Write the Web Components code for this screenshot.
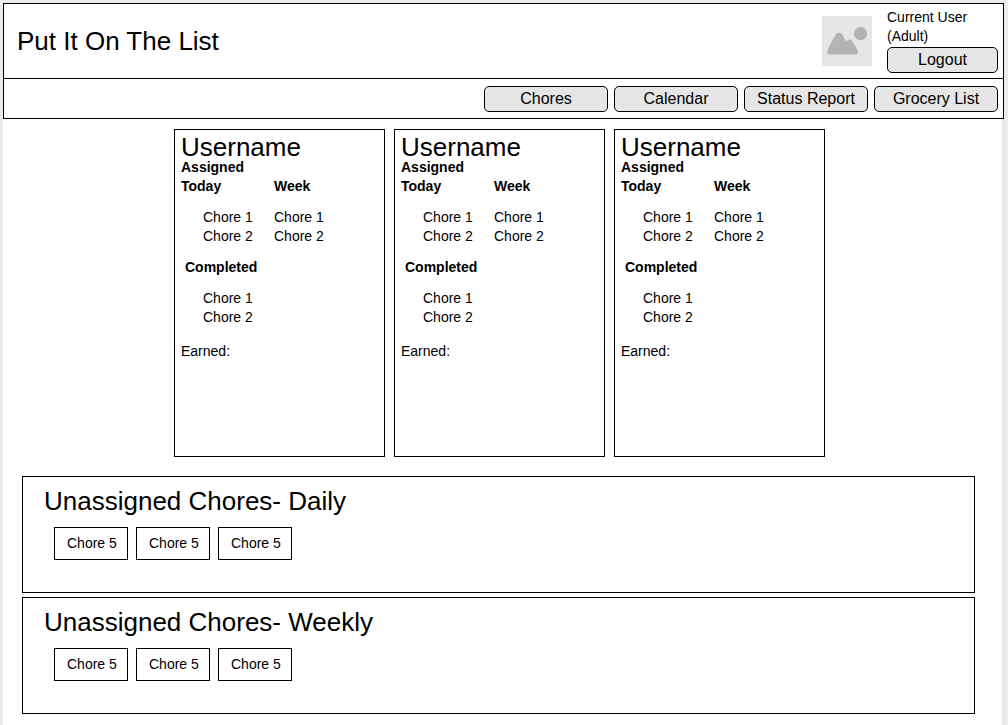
<!DOCTYPE html>
<html lang="en">
<head>
<meta charset="utf-8">
<meta name="viewport" content="width=device-width, initial-scale=1">
<title>Put It On The List</title>
<style>
  body {
    margin: 0;
    background: #ebebeb;
    color: #000;
    font: 14px/19px "Liberation Sans", Arial, sans-serif;
  }
</style>
</head>
<body>
<chore-app></chore-app>

<template id="chore-app">
  <style>
    :host { display: block; padding: 3px 4px 0 3px; }
    .sheet {
      box-sizing: border-box;
      min-height: calc(100vh - 3px);
      background: #fff;
      border-right: 2px solid #e6e6e6;
    }
    site-header { margin-right: -2px; }
    main { padding: 10px 27px 11px 19px; }
    .people {
      display: flex;
      flex-wrap: wrap;
      justify-content: center;
      gap: 9px;
      padding-left: 2px;
      margin-bottom: 19px;
    }
    .unassigned { display: grid; gap: 4px; }
  </style>
  <div class="sheet">
    <site-header>
      Put It On The List
      <span slot="user">Current User<br>(Adult)</span>
    </site-header>
    <main>
      <div class="people">
        <user-card name="Username"></user-card>
        <user-card name="Username"></user-card>
        <user-card name="Username"></user-card>
      </div>
      <div class="unassigned">
        <chore-panel>
          <span slot="title">Unassigned Chores- Daily</span>
          <chore-chip>Chore 5</chore-chip>
          <chore-chip>Chore 5</chore-chip>
          <chore-chip>Chore 5</chore-chip>
        </chore-panel>
        <chore-panel>
          <span slot="title">Unassigned Chores- Weekly</span>
          <chore-chip>Chore 5</chore-chip>
          <chore-chip>Chore 5</chore-chip>
          <chore-chip>Chore 5</chore-chip>
        </chore-panel>
      </div>
    </main>
  </div>
</template>

<template id="site-header">
  <style>
    :host { display: block; border: 1px solid #000; background: #fff; }
    .top {
      display: flex;
      align-items: center;
      box-sizing: border-box;
      min-height: 75px;
      padding: 0 5px 0 13px;
      border-bottom: 1px solid #000;
    }
    h1 { flex: 1; margin: 0; font-size: 26px; line-height: 30px; font-weight: 400; }
    image-placeholder { margin-right: 15px; }
    .user { width: 111px; padding-bottom: 1px; }
    .user ui-button { margin-top: 1px; }
    nav {
      display: flex;
      flex-wrap: wrap;
      justify-content: flex-end;
      gap: 6px;
      padding: 7px 5px 6px;
    }
    nav ui-button { width: 124px; }
  </style>
  <header>
    <div class="top">
      <h1><slot></slot></h1>
      <image-placeholder></image-placeholder>
      <div class="user">
        <slot name="user"></slot>
        <ui-button>Logout</ui-button>
      </div>
    </div>
    <nav aria-label="Main">
      <ui-button>Chores</ui-button>
      <ui-button>Calendar</ui-button>
      <ui-button>Status Report</ui-button>
      <ui-button>Grocery List</ui-button>
    </nav>
  </header>
</template>

<template id="image-placeholder">
  <style>
    :host { display: block; width: 50px; height: 50px; background: #e6e6e6; }
    svg { display: block; }
  </style>
  <svg width="50" height="50" viewBox="0 0 50 50" fill="#b3b3b3" role="img" aria-label="User picture">
    <circle cx="38.5" cy="17.7" r="6.6"/>
    <path d="M7.500 38.500C5.300 38.500 4.600 36.800 5.500 34.800C7.500 29.800 10.500 23.500 13.800 18.500C15.500 16.200 18.500 16.200 20.200 18.500C21.600 20.600 22.700 23 24 25.600C25.200 23.200 28.500 22.800 30 25C32.500 28.500 34.500 32.200 35.900 35.400C36.600 37.200 35.800 38.500 33.800 38.500Z"/>
  </svg>
</template>

<template id="ui-button">
  <style>
    :host { display: block; }
    button {
      box-sizing: border-box;
      width: 100%;
      height: 26px;
      padding: 0;
      display: block;
      border: 1px solid #000;
      border-radius: 5px;
      background: #e6e6e6;
      color: inherit;
      font: 16px/24px "Liberation Sans", Arial, sans-serif;
      cursor: pointer;
    }
  </style>
  <button type="button"><slot></slot></button>
</template>

<template id="user-card">
  <style>
    :host {
      display: block;
      box-sizing: border-box;
      width: 211px;
      min-height: 328px;
      padding: 7px 6px;
      border: 1px solid #000;
    }
    h2, h3, h4, p, ul { margin: 0; padding: 0; }
    h2 { font-size: 26px; line-height: 21px; font-weight: 400; }
    h3, h4 { font-size: 14px; line-height: 19px; font-weight: 700; }
    ul { list-style: none; margin: 12px 0; }
    .columns { display: grid; grid-template-columns: 93px 1fr; }
    .indent { padding-left: 22px; }
    .completed { padding-left: 4px; }
    p { margin-top: 15px; }
  </style>
  <h2></h2>
  <h3>Assigned</h3>
  <div class="columns">
    <section>
      <h4>Today</h4>
      <ul class="indent"><li>Chore 1</li><li>Chore 2</li></ul>
    </section>
    <section>
      <h4>Week</h4>
      <ul><li>Chore 1</li><li>Chore 2</li></ul>
    </section>
  </div>
  <h3 class="completed">Completed</h3>
  <ul class="indent"><li>Chore 1</li><li>Chore 2</li></ul>
  <p>Earned:</p>
</template>

<template id="chore-panel">
  <style>
    :host {
      display: block;
      box-sizing: border-box;
      min-height: 117px;
      padding: 9px 21px;
      border: 1px solid #000;
    }
    h2 { margin: 0 0 11px; font-size: 26px; line-height: 30px; font-weight: 400; }
    .chips { display: flex; flex-wrap: wrap; gap: 8px; padding-left: 10px; }
  </style>
  <h2><slot name="title"></slot></h2>
  <div class="chips"><slot></slot></div>
</template>

<template id="chore-chip">
  <style>
    :host {
      display: block;
      box-sizing: border-box;
      width: 74px;
      padding: 6px 0 6px 12px;
      border: 1px solid #000;
    }
  </style>
  <slot></slot>
</template>

<script>
  class TemplateElement extends HTMLElement {
    constructor() {
      super();
      const template = document.getElementById(this.localName);
      this.attachShadow({ mode: "open" }).append(template.content.cloneNode(true));
    }
  }

  class ChoreApp extends TemplateElement {}
  class SiteHeader extends TemplateElement {}
  class ImagePlaceholder extends TemplateElement {}
  class UiButton extends TemplateElement {}
  class ChorePanel extends TemplateElement {}
  class ChoreChip extends TemplateElement {}

  class UserCard extends TemplateElement {
    connectedCallback() {
      this.shadowRoot.querySelector("h2").textContent = this.getAttribute("name");
    }
  }

  customElements.define("image-placeholder", ImagePlaceholder);
  customElements.define("ui-button", UiButton);
  customElements.define("site-header", SiteHeader);
  customElements.define("user-card", UserCard);
  customElements.define("chore-chip", ChoreChip);
  customElements.define("chore-panel", ChorePanel);
  customElements.define("chore-app", ChoreApp);
</script>
</body>
</html>
